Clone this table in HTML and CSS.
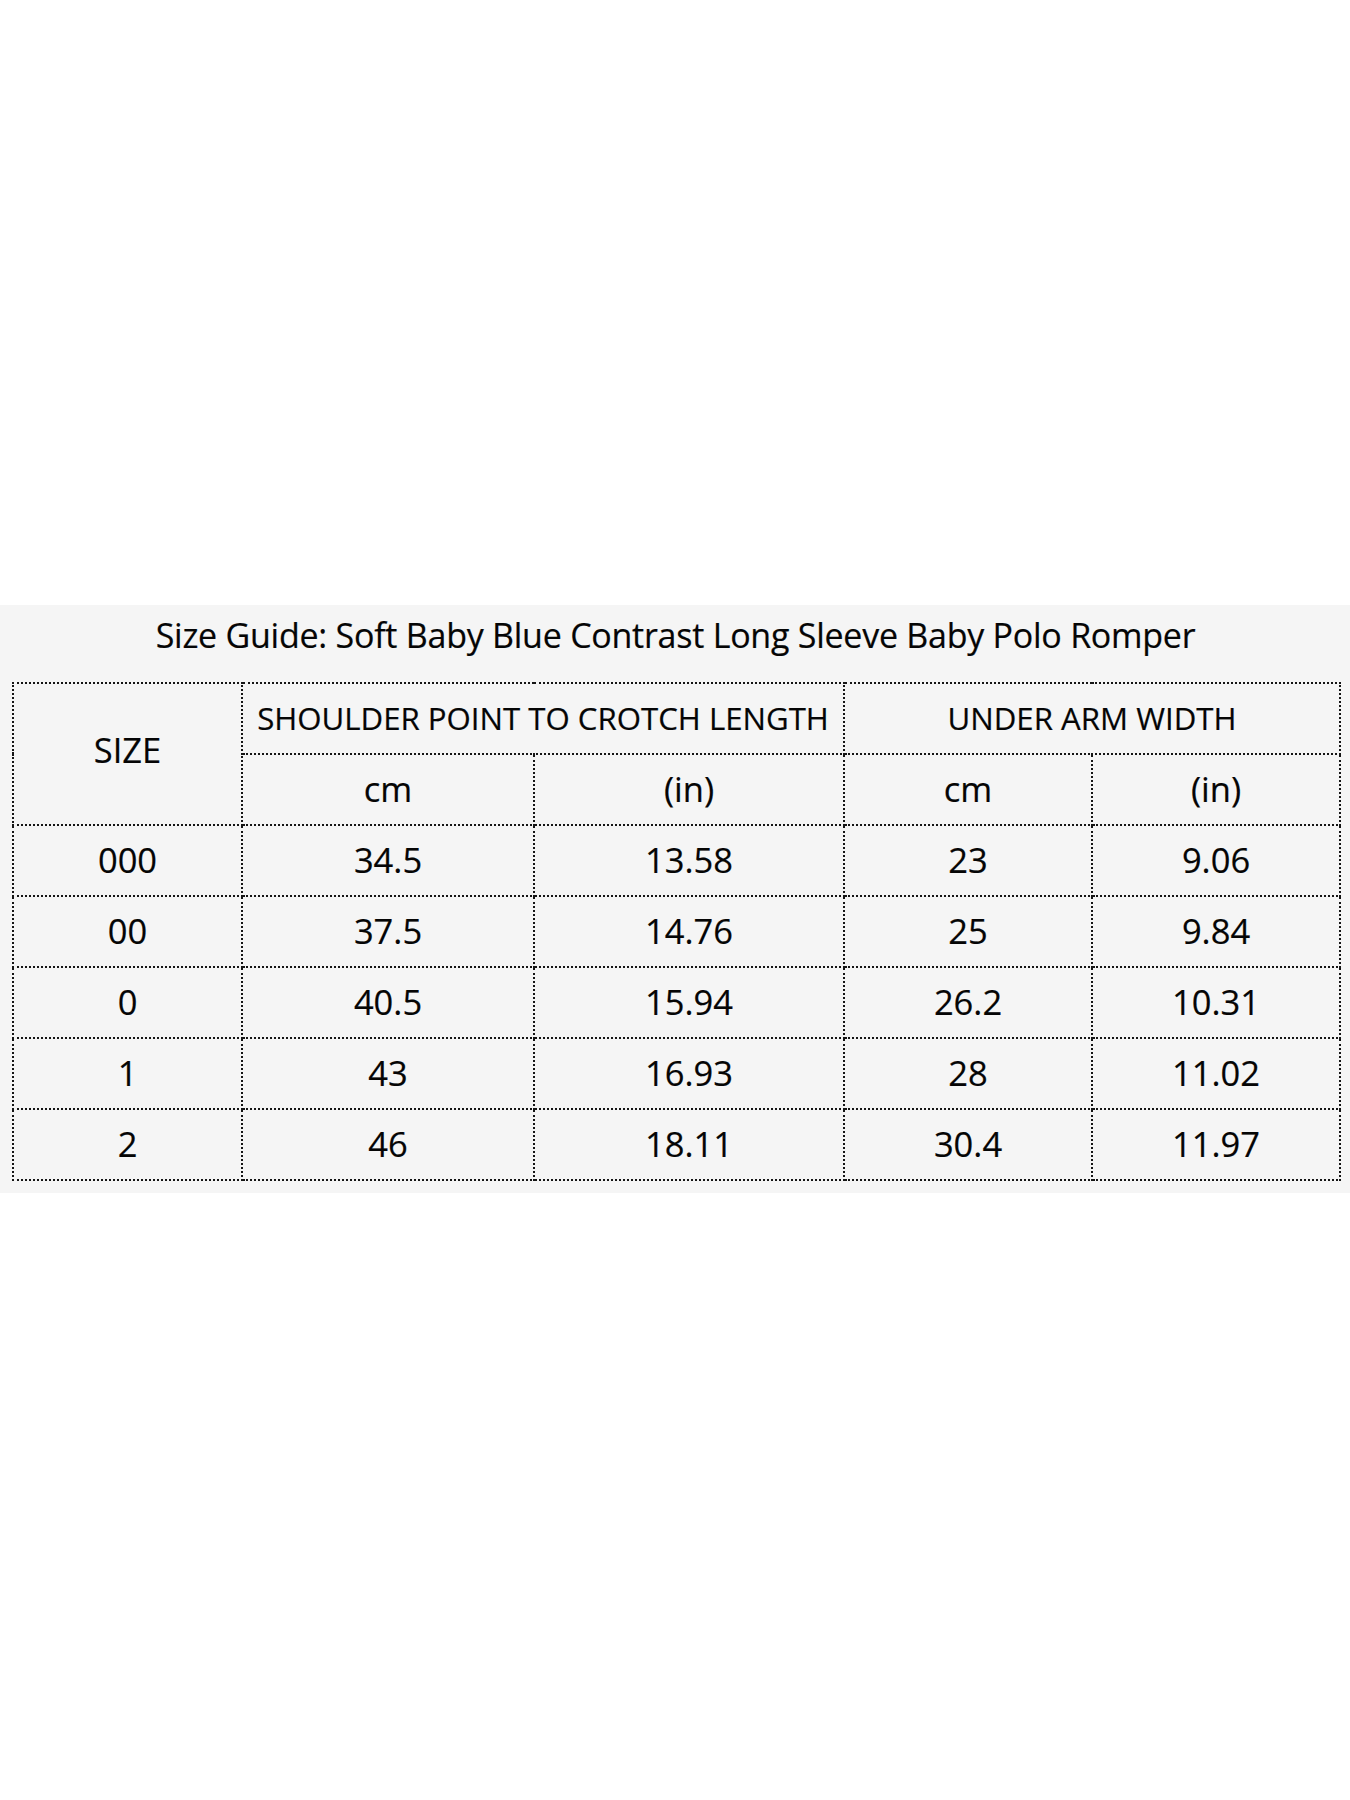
FILE: index.html
```html
<!DOCTYPE html>
<html>
<head>
<meta charset="utf-8">
<link rel="stylesheet" href="styles.css">
</head>
<body>
<div class="panel">
  <h1 class="title">Size Guide: Soft Baby Blue Contrast Long Sleeve Baby Polo Romper</h1>
  <table class="chart">
    <colgroup>
      <col class="c-size"><col class="c-a"><col class="c-b"><col class="c-c"><col class="c-d">
    </colgroup>
    <tr>
      <td rowspan="2" class="big">SIZE</td>
      <td colspan="2" class="group">SHOULDER POINT TO CROTCH LENGTH</td>
      <td colspan="2" class="group">UNDER ARM WIDTH</td>
    </tr>
    <tr><td>cm</td><td>(in)</td><td>cm</td><td>(in)</td></tr>
    <tr><td>000</td><td>34.5</td><td>13.58</td><td>23</td><td>9.06</td></tr>
    <tr><td>00</td><td>37.5</td><td>14.76</td><td>25</td><td>9.84</td></tr>
    <tr><td>0</td><td>40.5</td><td>15.94</td><td>26.2</td><td>10.31</td></tr>
    <tr><td>1</td><td>43</td><td>16.93</td><td>28</td><td>11.02</td></tr>
    <tr><td>2</td><td>46</td><td>18.11</td><td>30.4</td><td>11.97</td></tr>
  </table>
</div>
</body>
</html>
```
FILE: styles.css
```css
html, body {
  margin: 0;
  padding: 0;
  background: #ffffff;
}
body {
  font-family: "Open Sans", "Liberation Sans", sans-serif;
  color: #050505;
}
.panel {
  margin-top: 605px;
  height: 588px;
  background: #f5f5f5;
  padding: 0 11px 0 12px;
  box-sizing: border-box;
  overflow: hidden;
}
.title {
  margin: 0;
  padding-top: 7px;
  height: 77px;
  box-sizing: border-box;
  font-size: 34px;
  font-weight: 400;
  line-height: 46px;
  text-align: center;
  letter-spacing: -0.25px;
  -webkit-text-stroke: 0.2px #050505;
}
.chart {
  border-collapse: collapse;
  table-layout: fixed;
  width: 1327px;
}
.c-size { width: 229px; }
.c-a { width: 292px; }
.c-b { width: 310px; }
.c-c { width: 248px; }
.c-d { width: 248px; }
.chart td {
  border: 2px dotted #151515;
  height: 69px;
  padding: 0 0 2px;
  box-sizing: border-box;
  text-align: center;
  vertical-align: middle;
  font-size: 34.5px;
  line-height: 40px;
  letter-spacing: 0;
  -webkit-text-stroke: 0.2px #050505;
}
.chart tr { height: 71px; }
.chart td.big {
  padding-bottom: 8px;
}
.chart td.group {
  font-size: 31.2px;
  letter-spacing: 0;
}
```
